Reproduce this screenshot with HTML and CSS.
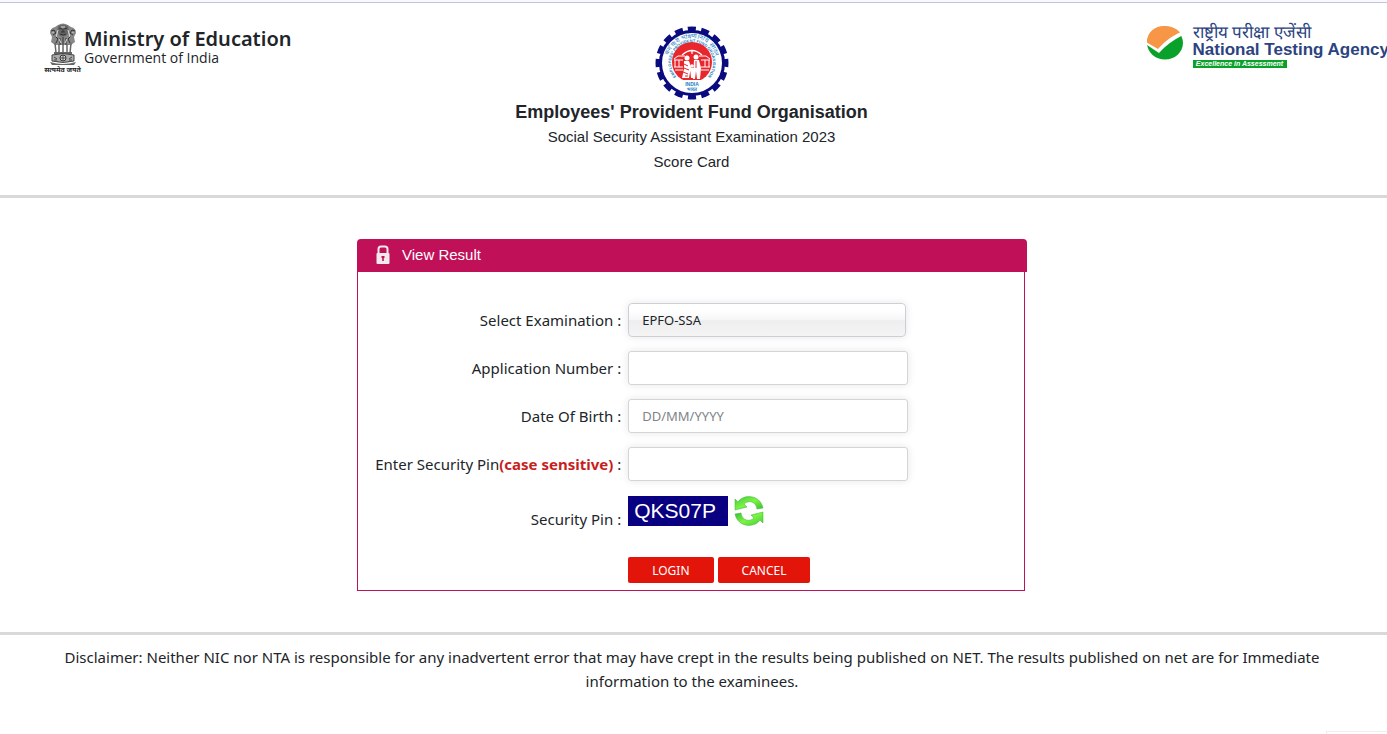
FILE: index.html
```
<!DOCTYPE html>
<html lang="en">
<head>
    <meta charset="UTF-8">
    <meta name="viewport" content="width=device-width, initial-scale=1.0">
    <title>Score Card</title>
    <link rel="stylesheet" href="styles.css">
</head>
<body>
    <div class="top-strip"></div>
    <header class="header">
        <div class="ministry">
            <div class="emblem">
                <svg width="30" height="43" viewBox="0 0 30 43" aria-hidden="true">
                    <!-- lions -->
                    <path d="M10 2Q15-1 20 2L23 4Q28 5 28 10L26 14L27 19L23 22H7L3 19L4 14L2 10Q2 5 7 4Z" fill="#888"/>
                    <path d="M10 3Q15 0 20 3L21 8L19 12Q15 15 11 12L9 8Z" fill="#666"/>
                    <path d="M11 5L14 6M19 5L16 6M13 9H17M12 11Q15 13 18 11M15 6V9M3 8L6 7L8 10L5 12M27 8L24 7L22 10L25 12M7 13L10 16L8 20M23 13L20 16L22 20M12 15V22M15 14V22M18 15V22" fill="none" stroke="#333"/>
                    <path d="M10 7L8 14M20 7L22 14M5 9V10M25 9V10M11 16L13 20M19 16L17 20M13 4H17" fill="none" stroke="#ddd"/>
                    <!-- legs -->
                    <path d="M7 20L8 30M11 21V30M15 22V30M19 21V30M23 20L22 30" fill="none" stroke="#666" stroke-width="1.5"/>
                    <path d="M6 29H24V31H6Z" fill="#666"/>
                    <!-- base with wheel -->
                    <path d="M4 32Q15 29 26 32V38Q15 41 4 38Z" fill="#aaa" stroke="#444"/>
                    <circle cx="15" cy="35" r="3" fill="#ddd" stroke="#333"/>
                    <path d="M12 35H18M15 32V38M6 34L9 36M24 34L21 36M6 37H9M21 37H24" fill="none" stroke="#444"/>
                    <path d="M2 39Q15 43 28 39L26 42H4Z" fill="#666"/>
                </svg>
                <span class="motto" lang="hi">सत्यमेव जयते</span>
            </div>
            <div>
                <div class="ministry-name">Ministry of Education</div>
                <div class="ministry-sub">Government of India</div>
            </div>
        </div>

        <div class="exam">
            <svg class="epfo" width="74" height="74" viewBox="-37 -37 74 74" role="img" aria-label="EPFO">
                <circle r="34" fill="none" stroke="#0b0b80" stroke-width="5" stroke-dasharray="8 5.35" transform="rotate(-97)"/>
                <circle r="31.5" fill="#fff" stroke="#0b0b80" stroke-width="3"/>
                <circle r="20" cy="-1" fill="#e8262b"/>
                <!-- buses -->
                <g fill="none" stroke="#fff">
                    <path d="M-18-4L-14-7H-7M18-4L14-7H7M-18-3H-9M9-3H18M-18 4H-9M9 4H18M-17 7H-9M9 7H17"/>
                    <path d="M-17-3V4M-13-3V4M13-3V4M17-3V4"/>
                    <path d="M-10-8Q0-17 10-8M0-13V-9" stroke-width="1.2"/>
                </g>
                <!-- family -->
                <g fill="#fff">
                    <circle cx="-5" cy="-5" r="2.5"/><circle cx="4" cy="-6" r="2.5"/><circle cx="0" cy="3" r="1.8"/>
                    <path d="M-8-2H-3L-1 4L-3 15H-10L-8 6ZM2-3H7L9 5L8 16H5L4 8L3 16H1ZM-2 5H2L1 15H-1Z"/>
                </g>
                <path d="M-8 1L-4 3M-8 5L-3 7M4-2V5M-9 9L-4 11M-7 13H-4" fill="none" stroke="#e8262b"/>
                <path d="M-12 17H12L9 28H-9Z" fill="#fff"/>
                <path id="arc-top" d="M-21 13A24.7 24.7 0 1 1 21 13" fill="none"/>
                <path id="arc-inner" d="M-15.5 14A20.9 20.9 0 1 1 15.5 14" fill="none"/>
                <text class="seal-hindi" text-anchor="middle"><textPath href="#arc-top" startOffset="50%">कर्मचारी भविष्य निधि संगठन</textPath></text>
                <text class="seal-text" text-anchor="middle"><textPath href="#arc-inner" startOffset="50%">EMPLOYEES' PROVIDENT FUND ORGANISATION</textPath></text>
                <text class="seal-india" y="23" text-anchor="middle">INDIA</text>
                <text class="seal-india" y="28" text-anchor="middle">भारत</text>
            </svg>
            <h1 class="exam-org">Employees' Provident Fund Organisation</h1>
            <p class="exam-line">Social Security Assistant Examination 2023</p>
            <p class="exam-line">Score Card</p>
        </div>

        <div class="nta">
            <svg width="38" height="34" viewBox="0 0 38 34" aria-hidden="true">
                <ellipse cx="19" cy="17" rx="18" ry="16.5" fill="#09a129"/>
                <path d="M1 16C1 6 9 0 18 0C26 0 32 3 35 8C26 12 18 18 13 25L1 17Z" fill="#f79646"/>
                <path d="M0 16L12 23C19 15 26 10 35 6L37 9C27 14 19 20 13 27L1 19Z" fill="#fff"/>
            </svg>
            <div>
                <div class="nta-hindi" lang="hi">राष्ट्रीय परीक्षा एजेंसी</div>
                <div class="nta-name">National Testing Agency</div>
                <div class="nta-tag">Excellence in Assessment</div>
            </div>
        </div>
    </header>

    <main class="main">
        <section class="panel">
            <h2 class="panel-head">
                <svg width="14" height="20" viewBox="0 0 14 20" aria-hidden="true">
                    <path d="M2.5 9V4Q2.5 1.5 5 1.5H9Q11.5 1.5 11.5 4V9" fill="none" stroke="#f3e8ee" stroke-width="2"/>
                    <rect x="0.5" y="8" width="13" height="11" rx="1" fill="#f3e8ee"/>
                    <path d="M5.5 11H8.5V13H7.8V16H6.2V13H5.5Z" fill="#bf1058"/>
                </svg>
                View Result
            </h2>
            <form class="form" onsubmit="return false">
                <label for="exam">Select Examination :</label>
                <select class="field select" id="exam">
                    <option>EPFO-SSA</option>
                </select>

                <label for="appno">Application Number :</label>
                <input class="field" type="text" id="appno">

                <label for="dob">Date Of Birth :</label>
                <input class="field" type="text" id="dob" placeholder="DD/MM/YYYY">

                <label for="pin">Enter Security Pin<b class="case">(case sensitive)</b> :</label>
                <input class="field" type="text" id="pin">

                <span class="captcha-label">Security Pin :</span>
                <div class="captcha">
                    <span class="captcha-code">QKS07P</span>
                    <button class="refresh" type="button" aria-label="Refresh security pin">
                        <svg width="30" height="30" viewBox="0 0 30 30" aria-hidden="true">
                            <defs>
                                <linearGradient id="green" x1="0" y1="0" x2="1" y2="1">
                                    <stop offset="0" stop-color="#42c83c"/>
                                    <stop offset="0.5" stop-color="#7cf542"/>
                                    <stop offset="1" stop-color="#35b935"/>
                                </linearGradient>
                            </defs>
                            <g id="arrow" fill="url(#green)" stroke="#36b536" stroke-width="0.5">
                                <path d="M1 3L4 6C9-2 26-2 29 12L23 13C22 5 14 4 10 8L13 11L1 14Z"/>
                            </g>
                            <use href="#arrow" transform="rotate(180 15 15)"/>
                        </svg>
                    </button>
                </div>

                <div class="actions">
                    <button class="btn" type="submit">LOGIN</button>
                    <button class="btn" type="reset">CANCEL</button>
                </div>
            </form>
        </section>
    </main>

    <footer class="footer">
        <p>Disclaimer: Neither NIC nor NTA is responsible for any inadvertent error that may have crept in the results being published on NET. The results published on net are for Immediate information to the examinees.</p>
    </footer>
    <div class="corner"></div>
</body>
</html>
```

FILE: styles.css
```
* {
    box-sizing: border-box;
}
body {
    margin: 0;
    min-height: 100vh;
    font-family: "Noto Sans", "Open Sans", sans-serif;
    font-size: 15px;
    line-height: 24px;
    color: #212529;
    background: #fff;
    overflow-x: hidden;
}
.top-strip {
    height: 3px;
    background: #f8f8ff;
    border-bottom: 1px solid #c3c3e0;
}

/* header */
.header {
    display: grid;
    grid-template-columns: minmax(0, 1fr) auto minmax(0, 1fr);
    align-items: start;
    padding: 20px 4px 20px 0;
    border-bottom: 3px solid #d9d9d9;
}
.ministry {
    display: flex;
    gap: 3px;
    padding-left: 44px;
}
.emblem {
    display: flex;
    flex-direction: column;
    align-items: center;
    width: 37px;
}
.motto {
    font-size: 7px;
    font-weight: bold;
    line-height: 8px;
    white-space: nowrap;
}
.ministry-name {
    padding-top: 4px;
    font-size: 20px;
    font-weight: 600;
    white-space: nowrap;
}
.ministry-sub {
    font-family: "Open Sans", sans-serif;
    font-size: 14px;
    line-height: 14px;
}
.exam {
    padding-top: 3px;
    font-family: "Liberation Sans", Arial, sans-serif;
    text-align: center;
}
.epfo {
    display: block;
    margin: 0 auto;
}
.seal-hindi {
    font-size: 6px;
    fill: #1c7ec2;
}
.seal-text {
    font-size: 4px;
    font-weight: bold;
    fill: #1c7ec2;
}
.seal-india {
    font-size: 5px;
    font-weight: bold;
    fill: #1c7ec2;
}
.exam-org {
    margin: 0;
    font-size: 18px;
    line-height: 24px;
}
.exam-line {
    margin: 0;
    font-size: 15px;
    line-height: 25px;
}
.exam-line:last-child {
    margin-bottom: 1px;
}
.nta {
    display: flex;
    justify-self: end;
    gap: 9px;
    margin-right: -6px;
    padding-top: 3px;
    font-family: "Liberation Sans", Arial, sans-serif;
    white-space: nowrap;
    color: #2b4380;
}
.nta-hindi {
    font-size: 17px;
    line-height: 14px;
}
.nta-name {
    font-size: 17px;
    font-weight: bold;
    line-height: 20px;
}
.nta-tag {
    width: 94px;
    font-size: 7px;
    font-style: italic;
    font-weight: bold;
    line-height: 8px;
    text-align: center;
    color: #fff;
    background: #09a129;
}

/* result form */
.main {
    padding: 41px 19px 41px 16px;
}
.panel {
    width: 100%;
    max-width: 670px;
    margin: 0 auto;
}
.panel-head {
    display: flex;
    align-items: center;
    gap: 12px;
    height: 33px;
    margin: 0;
    padding: 0 0 2px 19px;
    border-radius: 4px 4px 0 0;
    background: #bf1058;
    color: #fff;
    font-family: "Liberation Sans", Arial, sans-serif;
    font-size: 15px;
    font-weight: normal;
}
.form {
    display: grid;
    grid-template-columns: 2fr 3fr;
    gap: 14px 7px;
    align-items: center;
    margin-right: 2px;
    padding: 31px 1px 7px 0;
    border: 1px solid #bf1058;
    border-top: 0;
}
.form label,
.captcha-label {
    text-align: right;
    white-space: nowrap;
}
.case {
    color: #c81e1e;
}
.field {
    width: 280px;
    height: 34px;
    padding: 0 13px;
    border: 1px solid #d5d5d5;
    border-radius: 3px;
    background: #fff;
    box-shadow: 0 0 8px rgba(0, 0, 0, 0.1);
    color: #212529;
    font-family: inherit;
    font-size: 13px;
}
.field::placeholder {
    color: #808488;
}
.select {
    width: 278px;
    appearance: none;
    border-color: #ccd0d6;
    border-radius: 4px;
    background: linear-gradient(#fff 20%, #f6f6f6 50%, #eee 52%, #f4f4f4);
}
.captcha-label {
    padding-top: 12px;
}
.captcha {
    display: flex;
    align-self: start;
    gap: 6px;
    padding-top: 1px;
}
.captcha-code {
    width: 100px;
    height: 30px;
    padding-left: 6px;
    background: #080080;
    color: #fff;
    font-family: "Liberation Sans", Arial, sans-serif;
    font-size: 21px;
    line-height: 30px;
}
.refresh {
    display: flex;
    padding: 0;
    border: 0;
    background: none;
    cursor: pointer;
}
.actions {
    display: flex;
    grid-column: 2;
    gap: 4px;
    padding-top: 12px;
}
.btn {
    height: 26px;
    padding: 0 24px;
    border: 0;
    border-radius: 2px;
    background: #e3150b;
    color: #fff;
    font-family: inherit;
    font-size: 12px;
    cursor: pointer;
}

/* disclaimer */
.footer {
    padding: 10px 62px 0 59px;
    border-top: 3px solid #d9d9d9;
    text-align: center;
}
.footer p {
    margin: 0;
}
.corner {
    position: absolute;
    right: 0;
    bottom: 0;
    width: 61px;
    height: 3px;
    border-top: 1px solid #eee;
    border-left: 1px solid #eee;
}
```
